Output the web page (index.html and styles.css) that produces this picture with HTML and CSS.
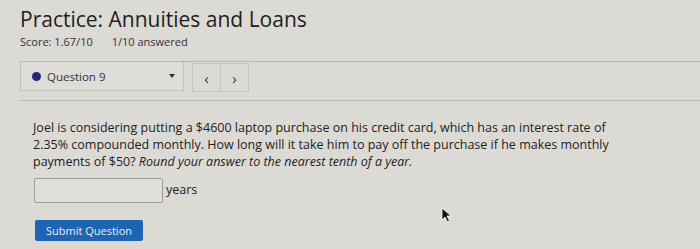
FILE: index.html
```html
<!DOCTYPE html>
<html>
<head>
<meta charset="utf-8">
<link rel="stylesheet" href="styles.css">
</head>
<body>
<div class="page">
  <h1 class="title">Practice: Annuities and Loans</h1>
  <div class="score"><span>Score: 1.67/10</span><span class="answered">1/10 answered</span></div>
  <div class="navbar">
    <div class="qselect">
      <span class="dot"></span>
      <span class="qlabel">Question 9</span>
      <span class="caret"></span>
    </div>
    <div class="arrows">
      <span class="arrow">&lsaquo;</span>
      <span class="arrow">&rsaquo;</span>
    </div>
  </div>
  <div class="question">
    <p class="qtext">Joel is considering putting a $4600 laptop purchase on his credit card, which has an interest rate of 2.35% compounded monthly. How long will it take him to pay off the purchase if he makes monthly payments of $50? <em>Round your answer to the nearest tenth of a year.</em></p>
    <div class="answer"><span class="input"></span><span class="unit">years</span></div>
    <button class="submit">Submit Question</button>
  </div>
  <svg class="cursor" width="12" height="16" viewBox="0 0 12 16"><path d="M1 1 L1 13 L4 10 L6.5 15 L8.5 14 L6 9 L10 9 Z" fill="#111" stroke="#fff" stroke-width="0.8"/></svg>
</div>
</body>
</html>
```

FILE: styles.css
```css
html, body { margin: 0; padding: 0; }
body {
  background: #dcdad4;
  font-family: "Open Sans", "Liberation Sans", sans-serif;
  color: #222;
  width: 700px;
  height: 249px;
  overflow: hidden;
}
.page { position: relative; padding: 6px 0 0 20px; }
.title {
  margin: 0;
  font-size: 21px;
  font-weight: 400;
  line-height: 26px;
  color: #1e1e1e;
}
.score {
  font-size: 11px;
  line-height: 16px;
  margin-top: 2px;
  color: #333;
}
.answered { margin-left: 19px; }
.navbar {
  margin-top: 11px;
  display: flex;
  gap: 8px;
  border-top: 1px solid #b9b9b4;
  border-bottom: 1px solid #b9b9b4;
  padding: 0 0 8px 0;
}
.qselect {
  width: 164px;
  height: 29px;
  border: 1px solid #c2c2bd;
  border-top: none;
  box-sizing: border-box;
  display: flex;
  align-items: center;
  padding: 0 8px 0 11px;
  background: #dfddd7;
}
.dot {
  width: 9px; height: 9px; border-radius: 50%;
  background: #23277a;
  margin-right: 6px;
}
.qlabel { font-size: 11.5px; flex: 1; color: #333; }
.caret {
  width: 0; height: 0;
  border-left: 3px solid transparent;
  border-right: 3px solid transparent;
  border-top: 4px solid #333;
}
.arrows {
  display: flex;
  height: 29px;
  margin-top: 1px;
  border: 1px solid #c6c6c1;
  box-sizing: border-box;
}
.arrow {
  width: 27px;
  display: flex; align-items: center; justify-content: center;
  font-size: 15px;
  color: #333;
}
.arrow + .arrow { border-left: 1px solid #c6c6c1; }
.question { padding: 18px 0 0 13px; }
.qtext {
  margin: 0;
  width: 592px;
  font-size: 12.5px;
  line-height: 17px;
  color: #1e1e1e;
}
.answer {
  display: flex;
  align-items: center;
  margin-top: 8px;
  margin-left: 1px;
}
.input {
  width: 129px; height: 25px;
  border: 1px solid #9c9c98;
  border-radius: 2px;
  box-sizing: border-box;
  background: #e0ded8;
}
.unit { font-size: 12.5px; margin-left: 3px; color: #222; margin-top: -2px; }
.submit {
  margin-top: 17px;
  margin-left: 2px;
  display: block;
  width: 108px;
  height: 21px;
  border: none;
  border-radius: 2px;
  background: #1d64b2;
  color: #e8eef8;
  font-family: "Open Sans", "Liberation Sans", sans-serif;
  font-size: 11px;
  padding: 0;
}
.cursor { position: absolute; left: 441px; top: 207px; }
```
